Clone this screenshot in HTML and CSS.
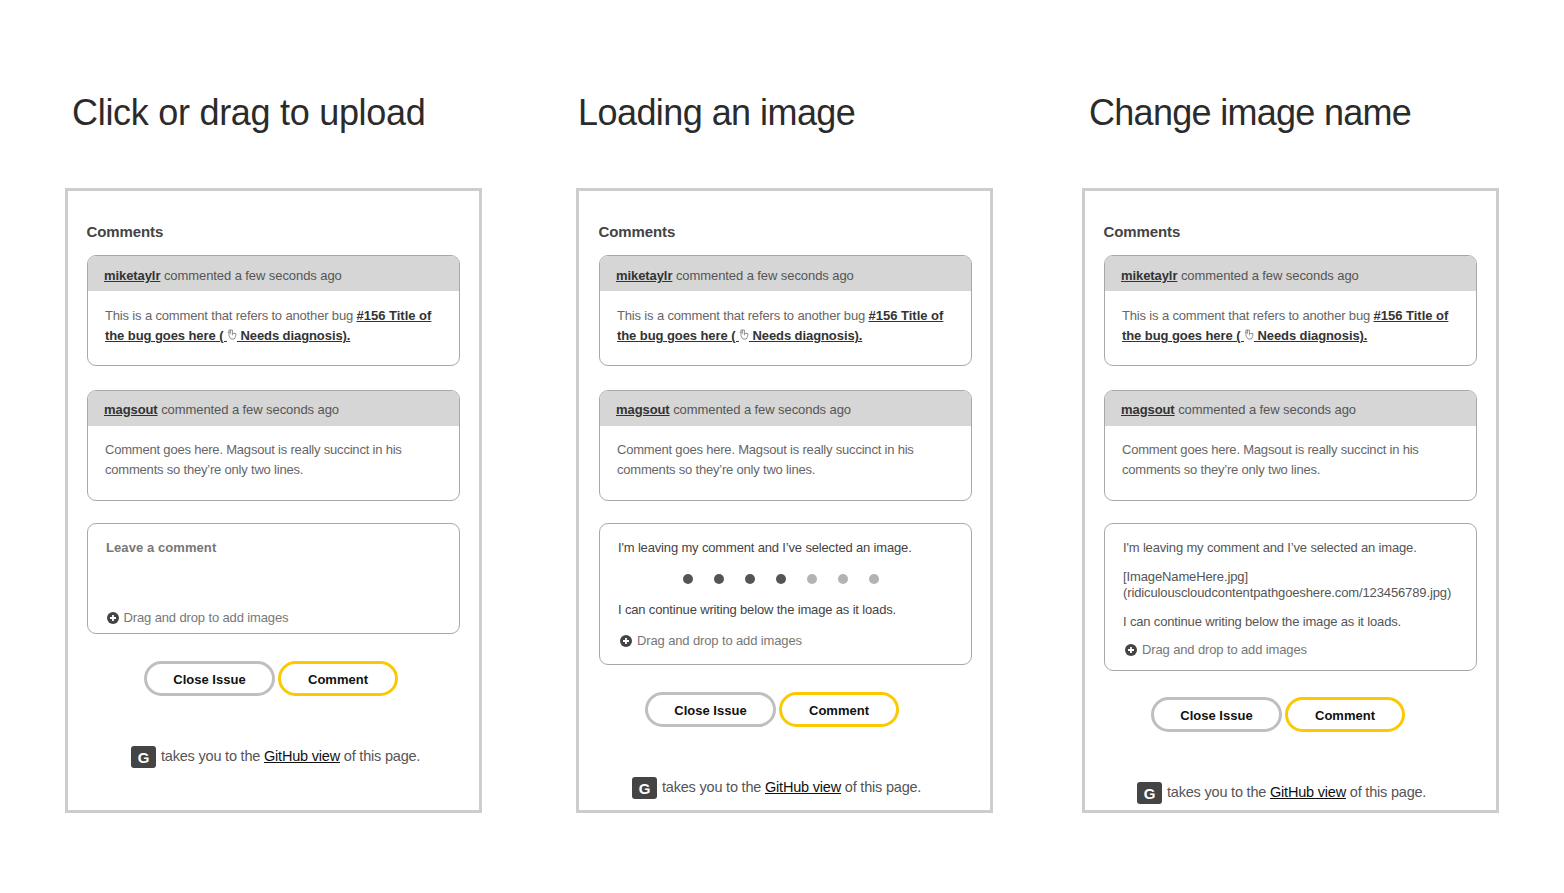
FILE: index.html
```html
<!DOCTYPE html>
<html lang="en">
<head>
<meta charset="utf-8">
<title>Comment image upload states</title>
<link rel="stylesheet" href="styles.css">
</head>
<body>
<svg class="defs" width="0" height="0" aria-hidden="true">
  <symbol id="hand" viewBox="0 0 10 11"><path d="M2 1h3.4v3.4h3.4v2.8l-1.6 2.8H4L2 7zM3.4 1v3.8M.8 3.4h1.4M5.4 4.4v2" fill="none" stroke="currentColor" stroke-width=".8"/></symbol>
  <symbol id="plus" viewBox="0 0 12 12"><circle cx="6" cy="6" r="6" fill="#444"/><path d="M6 3v6M3 6h6" stroke="#fff" stroke-width="1.8"/></symbol>
</svg>
<main class="board">
  <section class="column column-first">
    <h1 class="title title-click">Click or drag to upload</h1>
    <div class="panel">
      <h2 class="heading">Comments</h2>
      <article class="card card-first">
        <header class="card-head"><a class="user">miketaylr</a> commented a few seconds ago</header>
        <p class="card-body">This is a comment that refers to another bug <a class="ref">#156 Title of</a><br><a class="ref ref-wrap">the bug goes here ( <svg class="hand"><use href="#hand"/></svg> Needs diagnosis).</a></p>
      </article>
      <article class="card card-second">
        <header class="card-head"><a class="user">magsout</a> commented a few seconds ago</header>
        <p class="card-body">Comment goes here. Magsout is really succinct in his comments so they’re only two lines.</p>
      </article>
      <div class="composer composer-empty">
        <p class="placeholder">Leave a comment</p>
        <p class="drop"><svg class="plus"><use href="#plus"/></svg>Drag and drop to add images</p>
      </div>
      <div class="below below-first">
        <div class="actions"><button class="btn btn-close">Close Issue</button><button class="btn btn-comment">Comment</button></div>
        <p class="hint"><kbd class="key">G</kbd>takes you to the <a class="hint-link">GitHub view</a> of this page.</p>
      </div>
    </div>
  </section>

  <section class="column column-second">
    <h1 class="title title-loading">Loading an image</h1>
    <div class="panel panel-wide">
      <h2 class="heading">Comments</h2>
      <article class="card card-first">
        <header class="card-head"><a class="user">miketaylr</a> commented a few seconds ago</header>
        <p class="card-body">This is a comment that refers to another bug <a class="ref">#156 Title of</a><br><a class="ref ref-wrap">the bug goes here ( <svg class="hand"><use href="#hand"/></svg> Needs diagnosis).</a></p>
      </article>
      <article class="card card-second">
        <header class="card-head"><a class="user">magsout</a> commented a few seconds ago</header>
        <p class="card-body">Comment goes here. Magsout is really succinct in his comments so they’re only two lines.</p>
      </article>
      <div class="composer composer-loading">
        <p class="typed">I'm leaving my comment and I’ve selected an image.</p>
        <div class="dots"><i class="dot"></i><i class="dot"></i><i class="dot"></i><i class="dot"></i><i class="dot dot-off"></i><i class="dot dot-off"></i><i class="dot dot-off"></i></div>
        <p class="typed">I can continue writing below the image as it loads.</p>
        <p class="drop drop-flow"><svg class="plus"><use href="#plus"/></svg>Drag and drop to add images</p>
      </div>
      <div class="below">
        <div class="actions"><button class="btn btn-close">Close Issue</button><button class="btn btn-comment">Comment</button></div>
        <p class="hint"><kbd class="key">G</kbd>takes you to the <a class="hint-link">GitHub view</a> of this page.</p>
      </div>
    </div>
  </section>

  <section class="column column-third">
    <h1 class="title title-change">Change image name</h1>
    <div class="panel">
      <h2 class="heading">Comments</h2>
      <article class="card card-first">
        <header class="card-head"><a class="user">miketaylr</a> commented a few seconds ago</header>
        <p class="card-body">This is a comment that refers to another bug <a class="ref">#156 Title of</a><br><a class="ref ref-wrap">the bug goes here ( <svg class="hand"><use href="#hand"/></svg> Needs diagnosis).</a></p>
      </article>
      <article class="card card-second">
        <header class="card-head"><a class="user">magsout</a> commented a few seconds ago</header>
        <p class="card-body">Comment goes here. Magsout is really succinct in his comments so they’re only two lines.</p>
      </article>
      <div class="composer composer-named">
        <p class="typed">I'm leaving my comment and I’ve selected an image.</p>
        <p class="typed typed-path">[ImageNameHere.jpg]<br>(ridiculouscloudcontentpathgoeshere.com/123456789.jpg)</p>
        <p class="typed typed-after">I can continue writing below the image as it loads.</p>
        <p class="drop drop-flow drop-named"><svg class="plus"><use href="#plus"/></svg>Drag and drop to add images</p>
      </div>
      <div class="below">
        <div class="actions"><button class="btn btn-close">Close Issue</button><button class="btn btn-comment">Comment</button></div>
        <p class="hint"><kbd class="key">G</kbd>takes you to the <a class="hint-link">GitHub view</a> of this page.</p>
      </div>
    </div>
  </section>
</main>
</body>
</html>
```
FILE: styles.css
```css
* { box-sizing: border-box; }
html, body { margin: 0; padding: 0; background: #fff; }
body { font-family: "Liberation Sans", Arial, sans-serif; color: #555; overflow: hidden; height: 893px; }
.defs { position: absolute; }
p, h1, h2 { margin: 0; font-weight: normal; }

.board { display: flex; padding-left: 65px; }
.column { width: 417px; flex: none; }
.column-second { margin-left: 94px; }
.column-third { margin-left: 89px; }

.title {
  height: 188px;
  padding: 91px 0 0 7px;
  font-size: 36px;
  line-height: 44px;
  color: #2b2b2b;
  white-space: nowrap;
}
.title-click { letter-spacing: -0.29px; }
.title-loading { padding-left: 2px; letter-spacing: -0.56px; }
.title-change { letter-spacing: -0.71px; }

.panel {
  width: 417px;
  height: 625px;
  border: 3px solid #cdcdcd;
  padding: 31px 19px 0 19px;
}
.panel-wide { padding-left: 20px; }
.heading { font-size: 15px; line-height: 20px; font-weight: bold; color: #444; letter-spacing: -0.1px; margin-bottom: 13px; margin-left: -0.5px; }

.card { width: 373px; height: 111px; border: 1px solid #a8a8a8; border-radius: 9px; overflow: hidden; }
.card-second { margin-top: 24px; }
.card-head { height: 35px; background: #d6d6d6; padding: 0 16px; font-size: 13px; line-height: 39px; letter-spacing: -0.08px; color: #555; white-space: nowrap; }
.card-second .card-head { line-height: 37px; }
.user { font-weight: bold; color: #333; text-decoration: underline; }
.card-body { padding: 15px 17px 0; font-size: 13px; line-height: 20px; letter-spacing: -0.16px; color: #666; }
.card-second .card-body { padding-top: 14px; letter-spacing: -0.2px; }
.ref { font-weight: bold; color: #333; text-decoration: underline; letter-spacing: 0; }
.ref-wrap { letter-spacing: -0.08px; }
.hand { width: 10px; height: 11px; color: #777; vertical-align: 0; }

.composer { width: 373px; margin-top: 22px; border: 1px solid #a8a8a8; border-radius: 9px; position: relative; }
.composer-empty { height: 111px; padding: 15px 18px 0; }
.composer-loading { height: 142px; padding: 15px 18px 0; }
.composer-named { height: 148px; padding: 15px 18px 0; }
.placeholder { font-size: 13px; line-height: 17px; font-weight: bold; color: #777; letter-spacing: 0.08px; }
.typed { font-size: 13px; line-height: 17px; color: #444; letter-spacing: -0.16px; white-space: nowrap; }
.typed-path { margin-top: 13px; line-height: 16px; color: #555; letter-spacing: -0.12px; }
.typed-after { margin-top: 12px; }
.composer-named .typed { color: #555; }
.dots { display: flex; gap: 21px; padding-left: 65px; margin: 16px 0 15px; height: 14px; align-items: center; }
.dot { width: 10px; height: 10px; border-radius: 50%; background: #555; }
.dot-off { background: #b3b3b3; }
.drop { position: absolute; left: 18.5px; bottom: 7px; display: flex; align-items: center; font-size: 13px; line-height: 17px; letter-spacing: -0.13px; color: #777; white-space: nowrap; }
.plus { width: 12px; height: 12px; margin-right: 5px; flex: none; }
.drop-flow { position: static; margin-top: 14px; padding-left: 2px; }
.drop-named { margin-top: 11px; padding-left: 2px; }

.below { padding-left: 57px; }
.column-second .below { padding-left: 46px; }
.column-third .below { padding-left: 47px; }
.actions { display: flex; gap: 3px; margin-top: 27px; }
.column-third .actions { margin-top: 26px; }
.btn {
  height: 35px;
  padding: 1px 0 0;
  background: #fff;
  border-radius: 18px;
  font: bold 13px "Liberation Sans", Arial, sans-serif;
  color: #111;
}
.btn-close { width: 131px; border: 3px solid #bfbfbf; }
.btn-comment { width: 120px; border: 3px solid #fcc900; }

.hint { display: flex; align-items: center; height: 20px; margin: 50px 0 2px -13px; font-size: 14.5px; letter-spacing: -0.2px; color: #555; white-space: pre; }
.key {
  width: 25px; height: 22px; margin-right: 5px; flex: none; align-self: flex-start;
  background: #444; border-radius: 3px; color: #fff;
  font: bold 15px/23px "Liberation Sans", Arial, sans-serif;
  text-align: center;
}
.column-third .hint { margin-left: -14px; }
.hint-link { color: #111; text-decoration: underline; }
```
